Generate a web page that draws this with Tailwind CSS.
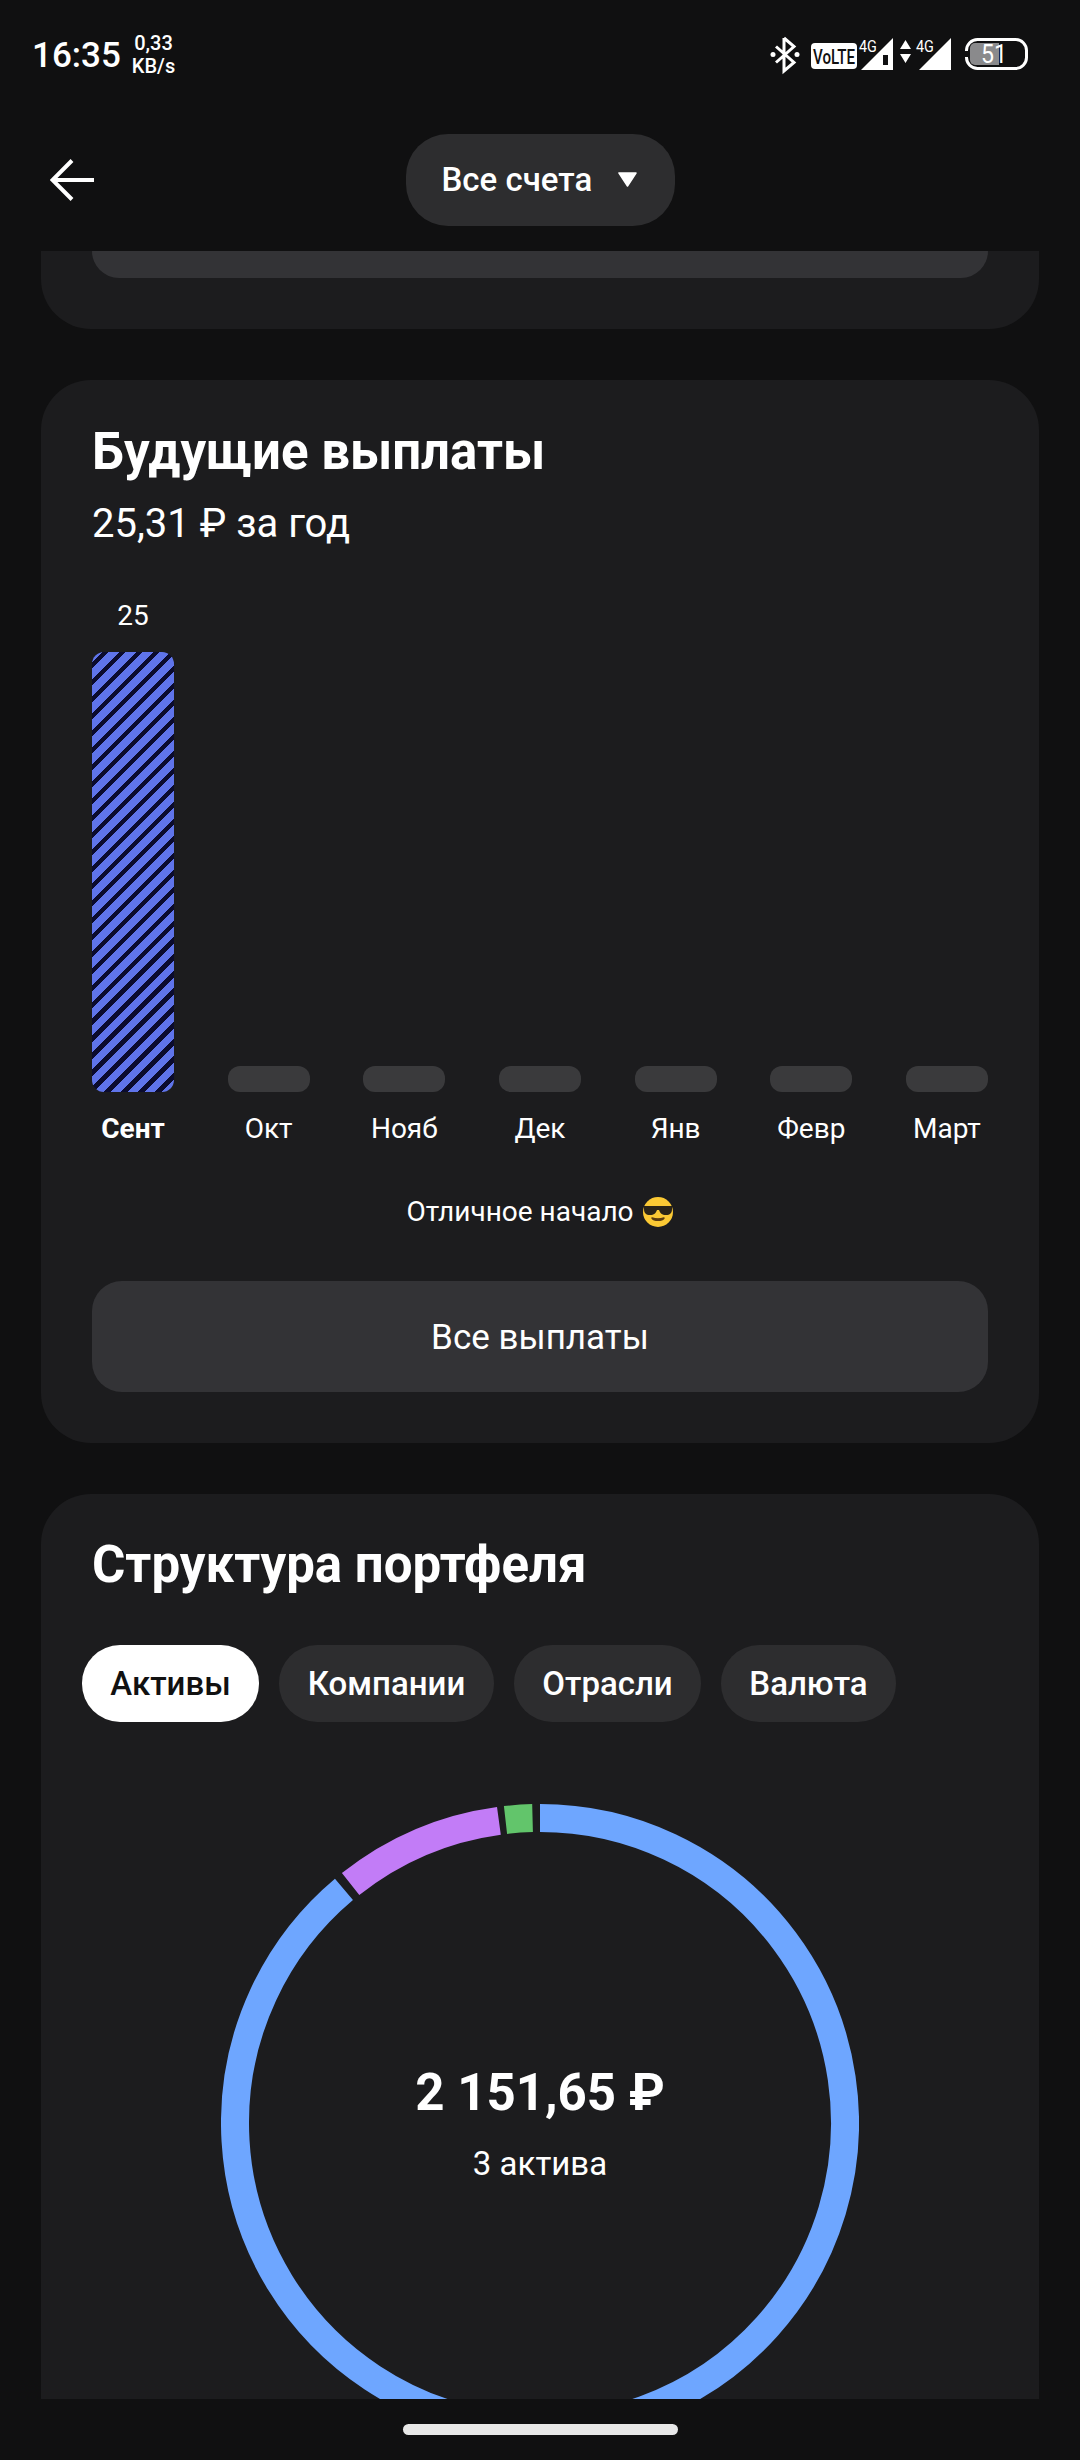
<!DOCTYPE html>
<html lang="ru">
<head>
  <meta charset="UTF-8">
  <meta name="viewport" content="width=device-width, initial-scale=1.0">
  <title>Портфель</title>
  <script src="https://cdn.jsdelivr.net/npm/@tailwindcss/browser@4"></script>
</head>
<body class="bg-[#101011] text-white [font-family:Roboto,sans-serif]">
  <div class="flex flex-col w-[1080px] h-[2460px] overflow-hidden">
    <!-- Status bar -->
    <div class="flex items-center justify-between h-[108px] pl-[32px] pr-[42px] shrink-0">
      <div class="flex items-center gap-[11px] mt-[2px]">
        <span class="text-[35px] font-medium leading-none">16:35</span>
        <div class="flex flex-col items-center text-[20px] font-medium leading-[23px]">
          <span>0,33</span>
          <span>KB/s</span>
        </div>
      </div>
      <svg width="270" height="40" viewBox="0 0 270 40" class="shrink-0 mt-[4px]">
        <!-- bluetooth -->
        <path d="M16 2v33l10-8.500-18-16M16 2l10 8.500-18 16" fill="none" stroke="#fff" stroke-width="3"/>
        <circle cx="5" cy="18.500" r="2.500" fill="#fff"/>
        <circle cx="29" cy="18.500" r="2.500" fill="#fff"/>
        <!-- volte -->
        <rect x="43" y="7" width="46" height="26" rx="4" fill="#fff"/>
        <text transform="translate(45 28) scale(.72 1)" font-size="21" font-weight="500" fill="#101011">VoLTE</text>
        <!-- signal 1 -->
        <path d="M125 2v32H93z" fill="#fff"/>
        <rect x="115" y="19" width="5" height="10" fill="#101011"/>
        <text transform="translate(91 16) scale(.9 1)" font-size="16" fill="#fff">4G</text>
        <!-- arrows -->
        <path d="M132 13l5.500-9 5.500 9zM132 18l5.500 9 5.500-9z" fill="#fff"/>
        <!-- signal 2 -->
        <path d="M183 2v32h-32z" fill="#fff"/>
        <text transform="translate(148 16) scale(.9 1)" font-size="16" fill="#fff">4G</text>
        <!-- battery -->
        <rect x="198.500" y="3.500" width="60" height="29" rx="11" fill="none" stroke="#fff" stroke-width="3"/>
        <path d="M207 7h24v22h-24a5 5 0 0 1-5-5v-12a5 5 0 0 1 5-5z" fill="#8a8a8c"/>
        <rect x="195" y="15" width="6" height="6" fill="#101011"/>
        <text x="226" y="27" font-size="25" text-anchor="middle" fill="#fff" textLength="26" lengthAdjust="spacingAndGlyphs">51</text>
      </svg>
    </div>

    <!-- Top bar -->
    <div class="grid grid-cols-[1fr_auto_1fr] items-center h-[143px] shrink-0">
      <div class="pl-[50px]">
        <svg width="44" height="42" viewBox="0 0 44 42" fill="none" stroke="#fff" stroke-width="4">
          <path d="M44 21H3M22 1.500L2.500 21 22 40.500"/>
        </svg>
      </div>
      <button class="flex items-center h-[92px] w-[269px] pl-[36px] rounded-[42px] bg-[#2d2d2f]">
        <span class="text-[33px] font-medium leading-none">Все счета</span>
        <svg width="19" height="15" viewBox="0 0 19 15" class="ml-[26px]"><path d="M1 1h17L9.500 14z" fill="#fff" stroke="#fff" stroke-width="1.500" stroke-linejoin="round"/></svg>
      </button>
      <div></div>
    </div>

    <!-- Scrolling content -->
    <div class="h-[2148px] mx-[41px] overflow-hidden shrink-0">
      <!-- Previous card, scrolled away -->
      <div class="h-[78px] px-[51px] rounded-b-[50px] bg-[#1c1c1e]">
        <div class="h-[27px] rounded-b-[28px] bg-[#333336]"></div>
      </div>

      <!-- Future payouts -->
      <section class="mt-[51px] h-[1063px] px-[51px] pt-[44px] rounded-[50px] bg-[#1c1c1e]">
        <h2 class="text-[51px] font-bold leading-[56px]">Будущие выплаты</h2>
        <p class="mt-[22px] text-[40px] leading-[44px]">25,31 ₽ за год</p>

        <div class="flex justify-between items-end mt-[54px] text-[28px] leading-[32px]">
          <div class="flex flex-col items-center w-[82px]">
            <span>25</span>
            <div class="mt-[20px] w-full h-[440px] rounded-[12px] bg-[repeating-linear-gradient(135deg,#5f74ea_0,#5f74ea_7.500px,#0b0b2e_7.500px,#0b0b2e_12px)]"></div>
            <span class="mt-[21px] font-bold whitespace-nowrap">Сент</span>
          </div>
          <div class="flex flex-col items-center w-[82px]">
            <div class="w-full h-[26px] rounded-[12px] bg-[#3a3a3c]"></div>
            <span class="mt-[21px] whitespace-nowrap">Окт</span>
          </div>
          <div class="flex flex-col items-center w-[82px]">
            <div class="w-full h-[26px] rounded-[12px] bg-[#3a3a3c]"></div>
            <span class="mt-[21px] whitespace-nowrap">Нояб</span>
          </div>
          <div class="flex flex-col items-center w-[82px]">
            <div class="w-full h-[26px] rounded-[12px] bg-[#3a3a3c]"></div>
            <span class="mt-[21px] whitespace-nowrap">Дек</span>
          </div>
          <div class="flex flex-col items-center w-[82px]">
            <div class="w-full h-[26px] rounded-[12px] bg-[#3a3a3c]"></div>
            <span class="mt-[21px] whitespace-nowrap">Янв</span>
          </div>
          <div class="flex flex-col items-center w-[82px]">
            <div class="w-full h-[26px] rounded-[12px] bg-[#3a3a3c]"></div>
            <span class="mt-[21px] whitespace-nowrap">Февр</span>
          </div>
          <div class="flex flex-col items-center w-[82px]">
            <div class="w-full h-[26px] rounded-[12px] bg-[#3a3a3c]"></div>
            <span class="mt-[21px] whitespace-nowrap">Март</span>
          </div>
        </div>

        <div class="flex justify-center items-center gap-[8px] mt-[51px] h-[32px] text-[28px]">
          <span>Отличное начало</span>
          <svg width="32" height="32" viewBox="0 0 32 32">
            <circle cx="16" cy="16" r="15" fill="#fbc934"/>
            <path d="M2 10h28v3c0 4-2 6-6 6-4 0-6-2-7-5h-2c-1 3-3 5-7 5-4 0-6-2-6-6z" fill="#2a2418"/>
            <path d="M10 22c2 3 10 3 12 0-3 1-9 1-12 0z" fill="#5b3c10" stroke="#5b3c10" stroke-width="1.500" stroke-linejoin="round"/>
          </svg>
        </div>

        <button class="block w-full h-[111px] mt-[53px] pt-[3px] rounded-[30px] bg-[#333336] text-[35px]">Все выплаты</button>
      </section>

      <!-- Portfolio structure -->
      <section class="mt-[51px] h-[1000px] pl-[41px] pt-[43px] rounded-t-[50px] bg-[#1c1c1e]">
        <h2 class="ml-[10px] text-[51px] font-bold leading-[56px]">Структура портфеля</h2>
        <div class="flex gap-[20px] mt-[52px] text-[33px] font-medium">
          <button class="flex items-center justify-center w-[177px] h-[77px] rounded-[38px] bg-white text-[#111]">Активы</button>
          <button class="flex items-center justify-center w-[215px] h-[77px] rounded-[38px] bg-[#2d2d2f]">Компании</button>
          <button class="flex items-center justify-center w-[187px] h-[77px] rounded-[38px] bg-[#2d2d2f]">Отрасли</button>
          <button class="flex items-center justify-center w-[175px] h-[77px] rounded-[38px] bg-[#2d2d2f]">Валюта</button>
        </div>

        <div class="relative w-[638px] h-[638px] mt-[82px] ml-[139px]">
          <svg width="638" height="638" viewBox="0 0 638 638" fill="none" stroke-width="28">
            <path d="M319 14A305 305 0 1 1 122.950 85.360" stroke="#6ea6ff"/>
            <path d="M129.600 80A305 305 0 0 1 277.900 16.800" stroke="#c27cf7"/>
            <path d="M284.500 16A305 305 0 0 1 311.550 14.100" stroke="#62c56b"/>
          </svg>
          <div class="absolute inset-0 flex flex-col items-center justify-center">
            <span class="text-[51px] font-bold leading-[60px]">2 151,65 ₽</span>
            <span class="mt-[22px] text-[33px] leading-[38px]">3 актива</span>
          </div>
        </div>
      </section>
    </div>

    <!-- Gesture bar -->
    <div class="flex justify-center pt-[25px] shrink-0">
      <div class="w-[275px] h-[11px] rounded-full bg-[#e8e8e8]"></div>
    </div>
  </div>
</body>
</html>
